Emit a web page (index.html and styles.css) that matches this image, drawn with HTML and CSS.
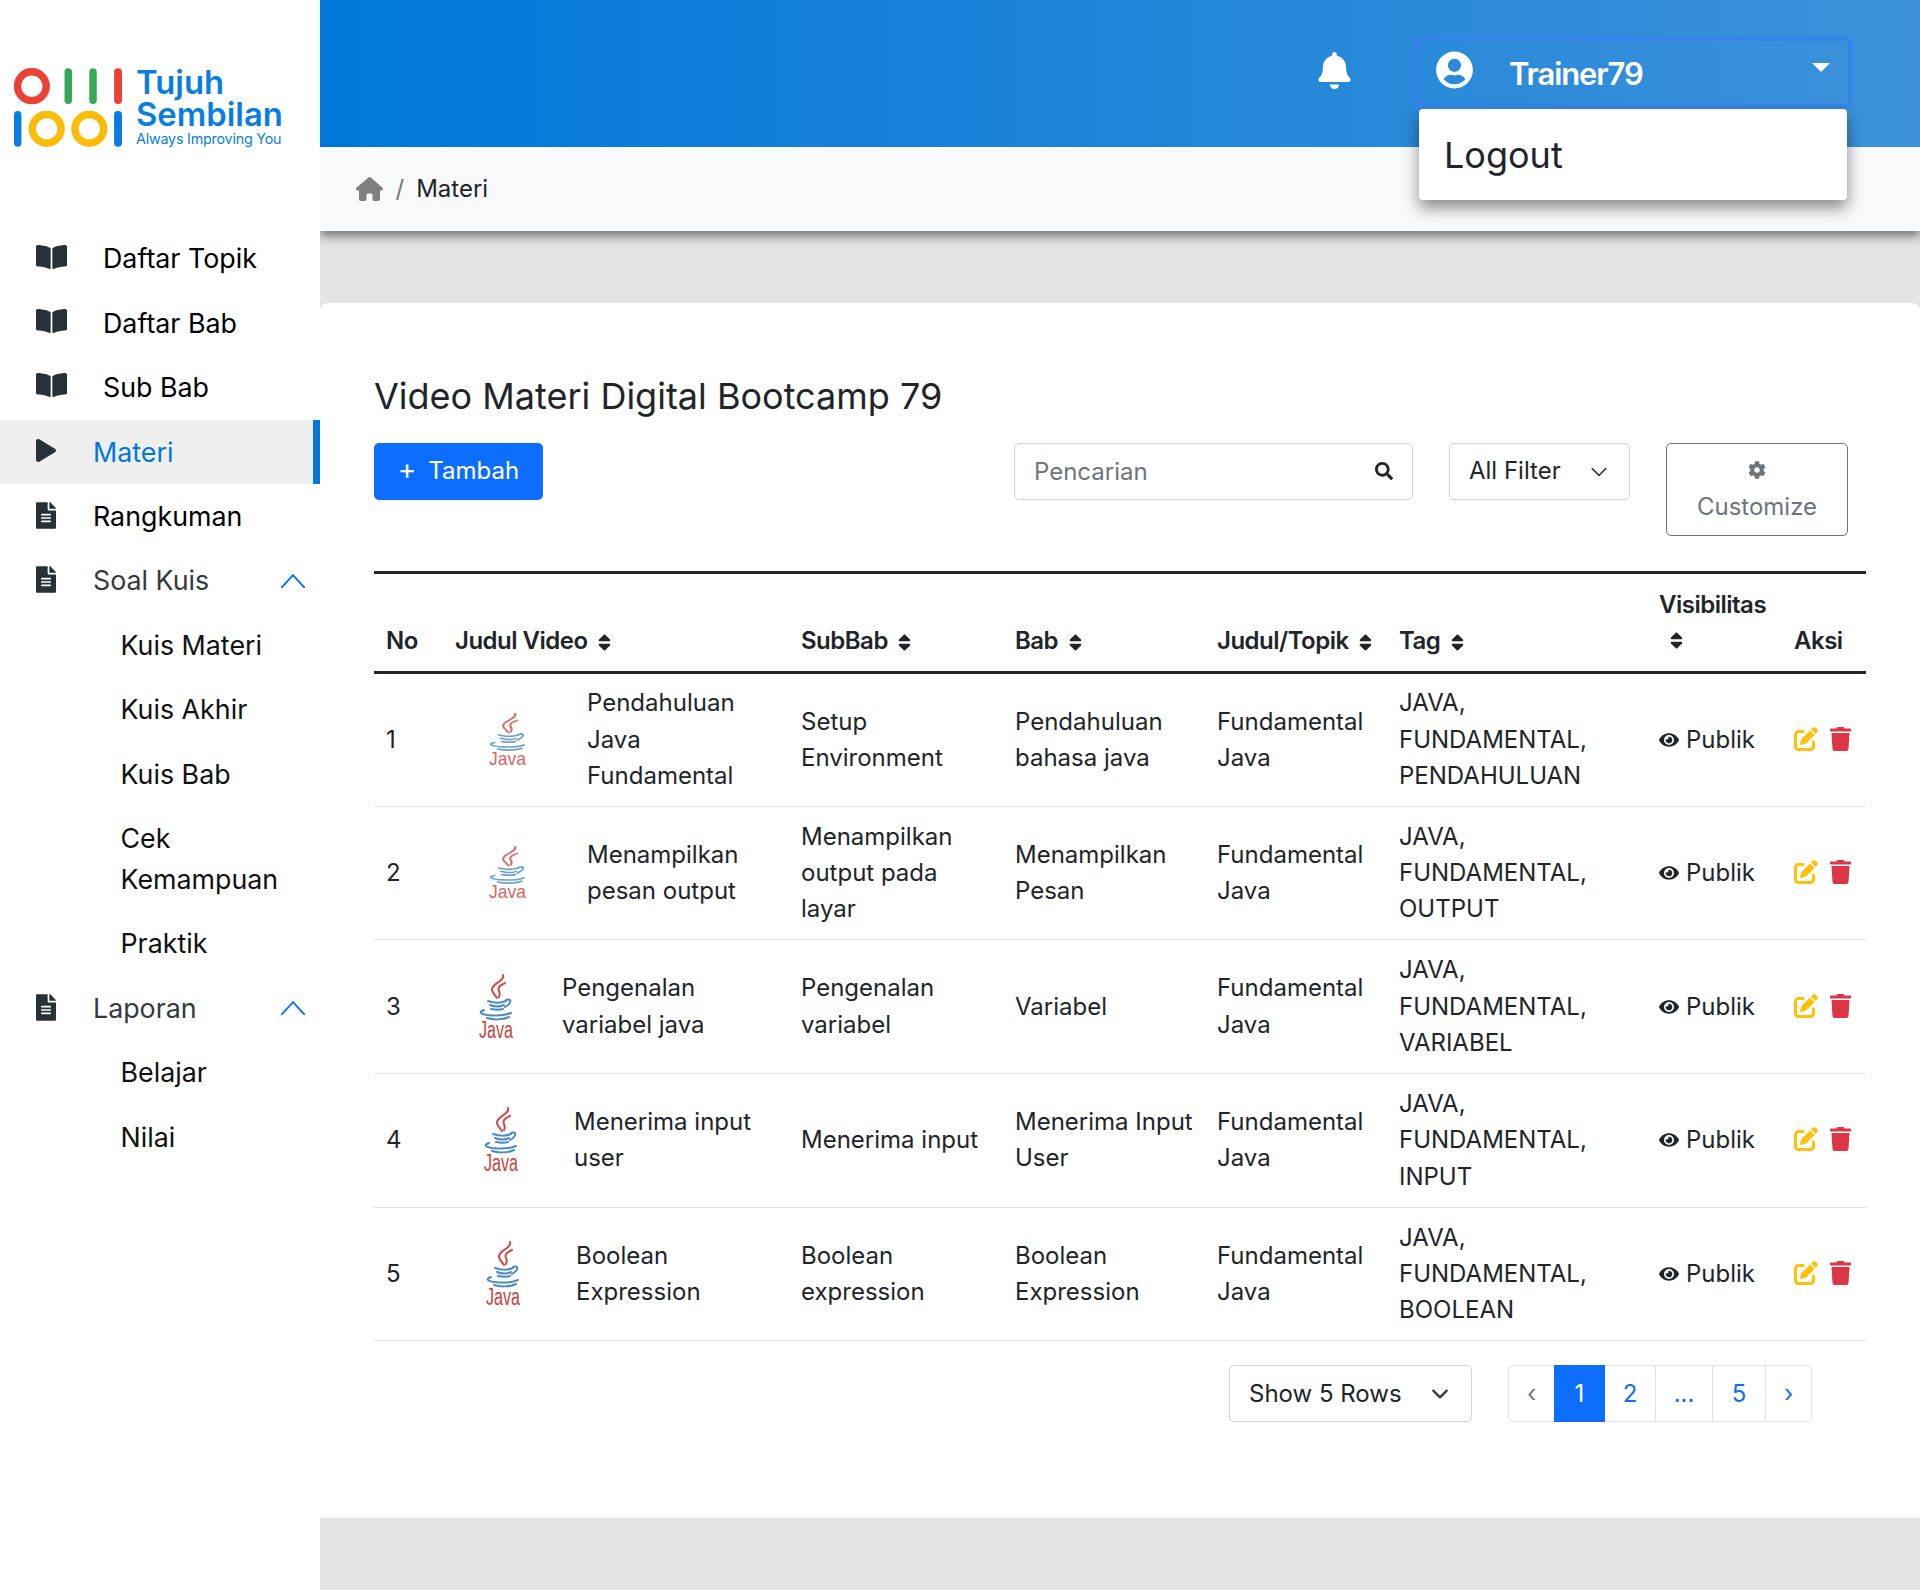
FILE: index.html
```html
<!DOCTYPE html>
<html lang="en">
<head>
    <meta charset="UTF-8">
    <meta name="viewport" content="width=device-width, initial-scale=1.0">
    <title>Video Materi</title>
    <link rel="stylesheet" href="styles.css">
</head>
<body>
    <svg class="sprites" xmlns="http://www.w3.org/2000/svg">
        <symbol id="i-book" viewBox="0 0 576 512"><path d="M542.22 32.05c-54.8 3.11-163.72 14.43-230.96 55.59-4.64 2.84-7.27 7.89-7.27 13.17v363.87c0 11.55 12.63 18.85 23.28 13.49 69.18-34.82 169.23-44.32 218.7-46.92 16.89-.89 30.02-14.43 30.02-30.66V62.75c.01-17.71-15.35-31.74-33.77-30.7zM264.73 87.64C197.5 46.48 88.58 35.17 33.78 32.05 15.36 31.01 0 45.04 0 62.75V400.6c0 16.24 13.13 29.78 30.02 30.66 49.49 2.6 149.59 12.11 218.77 46.95 10.62 5.35 23.21-1.94 23.21-13.46V100.63c0-5.29-2.62-10.14-7.27-12.99z"/></symbol>
        <symbol id="i-play" viewBox="0 0 448 512"><path d="M424.4 214.7L72.4 6.6C43.8-10.3 0 6.1 0 47.9V464c0 37.5 40.7 60.1 72.4 41.3l352-208c31.4-18.5 31.5-64.1 0-82.6z"/></symbol>
        <symbol id="i-file" viewBox="0 0 384 512"><path d="M224 136V0H24C10.7 0 0 10.7 0 24v464c0 13.3 10.7 24 24 24h336c13.3 0 24-10.7 24-24V160H248c-13.2 0-24-10.8-24-24zm64 236c0 6.6-5.4 12-12 12H108c-6.6 0-12-5.4-12-12v-8c0-6.6 5.4-12 12-12h168c6.6 0 12 5.4 12 12v8zm0-64c0 6.6-5.4 12-12 12H108c-6.6 0-12-5.4-12-12v-8c0-6.6 5.4-12 12-12h168c6.6 0 12 5.4 12 12v8zm0-72v8c0 6.6-5.4 12-12 12H108c-6.6 0-12-5.4-12-12v-8c0-6.6 5.4-12 12-12h168c6.6 0 12 5.4 12 12zm96-114.1v6.1H256V0h6.1c6.4 0 12.5 2.5 17 7l97.9 98c4.5 4.5 7 10.6 7 16.9z"/></symbol>
        <symbol id="i-up" viewBox="0 0 24 15"><path d="M1 14L12 2l11 12" fill="none" stroke="currentColor" stroke-width="1.8"/></symbol>
        <symbol id="i-sort" viewBox="0 0 320 512"><path d="M41 288h238c21.4 0 32.1 25.9 17 41L177 448c-9.4 9.4-24.6 9.4-33.9 0L24 329c-15.1-15.1-4.4-41 17-41zm255-105L177 64c-9.4-9.4-24.6-9.4-33.9 0L24 183c-15.1 15.1-4.4 41 17 41h238c21.4 0 32.1-25.9 17-41z"/></symbol>
        <symbol id="i-eye" viewBox="0 0 576 512"><path d="M572.52 241.4C518.29 135.59 410.93 64 288 64S57.68 135.64 3.48 241.41a32.35 32.35 0 0 0 0 29.19C57.71 376.41 165.07 448 288 448s230.32-71.64 284.52-177.41a32.35 32.35 0 0 0 0-29.19zM288 400a144 144 0 1 1 144-144 143.93 143.93 0 0 1-144 144zm0-240a95.31 95.31 0 0 0-25.31 3.79 47.85 47.85 0 0 1-66.9 66.9A95.78 95.78 0 1 0 288 160z"/></symbol>
        <symbol id="i-edit" viewBox="0 0 512 512"><path d="M471.6 21.7c-21.9-21.9-57.3-21.9-79.2 0L362.3 51.7l97.9 97.9 30.1-30.1c21.9-21.9 21.9-57.3 0-79.2L471.6 21.7zm-299.2 220c-6.1 6.1-10.8 13.6-13.5 21.9l-29.6 88.8c-2.9 8.6-.6 18.1 5.8 24.6s15.9 8.7 24.6 5.8l88.8-29.6c8.2-2.7 15.7-7.4 21.9-13.5L437.7 172.3 339.7 74.3 172.4 241.7zM96 64C43 64 0 107 0 160V416c0 53 43 96 96 96H352c53 0 96-43 96-96V320c0-17.7-14.3-32-32-32s-32 14.3-32 32v96c0 17.7-14.3 32-32 32H96c-17.7 0-32-14.3-32-32V160c0-17.7 14.3-32 32-32h96c17.7 0 32-14.3 32-32s-14.3-32-32-32H96z"/></symbol>
        <symbol id="i-trash" viewBox="0 0 448 512"><path d="M432 32H312l-9.4-18.7A24 24 0 0 0 281.1 0H166.8a23.72 23.72 0 0 0-21.4 13.3L136 32H16A16 16 0 0 0 0 48v32a16 16 0 0 0 16 16h416a16 16 0 0 0 16-16V48a16 16 0 0 0-16-16zM53.2 467a48 48 0 0 0 47.9 45h245.8a48 48 0 0 0 47.9-45L416 128H32z"/></symbol>
        <symbol id="i-chevron" viewBox="0 0 16 16"><path d="M2 5l6 6 6-6" fill="none" stroke="currentColor" stroke-linecap="round" stroke-linejoin="round"/></symbol>
        <symbol id="i-java" viewBox="0 0 34 66" preserveAspectRatio="none">
            <g class="java-steam">
                <path d="M24 1C26 7 12 10 13 16 13.500 19 16 21 18 24"/>
                <path d="M26 9C22 11 18 13 20 17 21 19 21 21 20 23"/>
            </g>
            <g class="java-cup">
                <path d="M9 27C15 29 22 29 27 27"/>
                <path d="M27 26C33 24 33 29 26 33"/>
                <path d="M11 31C16 33 21 33 25 31"/>
                <path d="M12 35C17 36 21 36 24 35"/>
                <path d="M5 36C-1 38 2 40 8 41 16 42 25 42 32 39"/>
                <path d="M8 44C14 46 24 46 30 43"/>
            </g>
            <text class="java-word" x="0" y="64" textLength="34" lengthAdjust="spacingAndGlyphs">Java</text>
        </symbol>
    </svg>

    <div class="app">
        <aside class="sidebar">
            <div class="logo">
                <svg class="logo-mark" viewBox="0 0 110 80" xmlns="http://www.w3.org/2000/svg">
                    <circle cx="18" cy="18" r="14.500" fill="none" stroke="#ea4335" stroke-width="7.500"/>
                    <rect x="51" y="0" width="7.500" height="36" rx="3.700" fill="#34a853"/>
                    <rect x="76" y="0" width="7.500" height="36" rx="3.700" fill="#34a853"/>
                    <rect x="101" y="0" width="8" height="36" rx="3.700" fill="#ea4335"/>
                    <rect x="0" y="43" width="7.500" height="36" rx="3.700" fill="#0a7ee0"/>
                    <circle cx="33" cy="61" r="14.500" fill="none" stroke="#fbbc05" stroke-width="7.500"/>
                    <circle cx="76" cy="61" r="14.500" fill="none" stroke="#fbbc05" stroke-width="7.500"/>
                    <rect x="101" y="43" width="8" height="36" rx="3.700" fill="#0a7ee0"/>
                </svg>
                <div class="logo-text">
                    <div class="logo-name">Tujuh</div>
                    <div class="logo-name">Sembilan</div>
                    <div class="logo-tag">Always Improving You</div>
                </div>
            </div>
            <nav class="menu">
                <a class="menu-item wide"><svg class="menu-icon book"><use href="#i-book"/></svg>Daftar Topik</a>
                <a class="menu-item wide"><svg class="menu-icon book"><use href="#i-book"/></svg>Daftar Bab</a>
                <a class="menu-item wide"><svg class="menu-icon book"><use href="#i-book"/></svg>Sub Bab</a>
                <a class="menu-item active"><svg class="menu-icon"><use href="#i-play"/></svg>Materi</a>
                <a class="menu-item"><svg class="menu-icon"><use href="#i-file"/></svg>Rangkuman</a>
                <a class="menu-item group"><svg class="menu-icon"><use href="#i-file"/></svg>Soal Kuis<svg class="menu-arrow"><use href="#i-up"/></svg></a>
                <a class="menu-sub">Kuis Materi</a>
                <a class="menu-sub">Kuis Akhir</a>
                <a class="menu-sub">Kuis Bab</a>
                <a class="menu-sub">Cek Kemampuan</a>
                <a class="menu-sub">Praktik</a>
                <a class="menu-item group"><svg class="menu-icon"><use href="#i-file"/></svg>Laporan<svg class="menu-arrow"><use href="#i-up"/></svg></a>
                <a class="menu-sub">Belajar</a>
                <a class="menu-sub">Nilai</a>
            </nav>
        </aside>

        <main class="main">
            <header class="topbar">
                <svg class="bell" viewBox="0 0 448 512"><path d="M224 512c35.32 0 63.97-28.65 63.97-64H160.03c0 35.35 28.65 64 63.97 64zm215.39-149.71c-19.32-20.76-55.47-51.99-55.47-154.29 0-77.7-54.48-139.9-127.94-155.16V32c0-17.67-14.32-32-31.98-32s-31.98 14.33-31.98 32v20.84C118.56 68.1 64.08 130.3 64.08 208c0 102.3-36.15 133.53-55.47 154.29-6 6.45-8.66 14.16-8.61 21.71.11 16.4 12.98 32 32.1 32h383.8c19.12 0 32-15.6 32.1-32 .05-7.55-2.61-15.27-8.61-21.71z"/></svg>
                <div class="user-box">
                    <button class="user-btn">
                        <svg class="avatar" viewBox="0 0 496 512"><path d="M248 8C111 8 0 119 0 256s111 248 248 248 248-111 248-248S385 8 248 8zm0 96c48.6 0 88 39.4 88 88s-39.4 88-88 88-88-39.4-88-88 39.4-88 88-88zm0 344c-58.7 0-111.3-26.6-146.5-68.2 18.8-35.4 55.6-59.8 98.5-59.8 2.4 0 4.8.4 7.1 1.1 13 4.2 26.6 6.9 40.9 6.9 14.3 0 28-2.7 40.9-6.9 2.3-.7 4.7-1.1 7.1-1.1 42.9 0 79.7 24.4 98.5 59.8C359.3 421.4 306.7 448 248 448z"/></svg>
                        <span class="user-name">Trainer79</span>
                        <span class="caret"></span>
                    </button>
                    <div class="dropdown">Logout</div>
                </div>
            </header>
            <div class="breadcrumb">
                <svg class="home" viewBox="0 0 576 512"><path d="M575.8 255.5c0 18-15 32.1-32 32.1h-32l.7 160.2c0 2.7-.2 5.4-.5 8.1V472c0 22.1-17.9 40-40 40H456c-1.100 0-2.200 0-3.300-.1c-1.400 .1-2.800 .1-4.200 .1H416 392c-22.100 0-40-17.900-40-40V448 384c0-17.700-14.300-32-32-32H256c-17.700 0-32 14.300-32 32v64 24c0 22.100-17.900 40-40 40H160 128.100c-1.500 0-3-.1-4.500-.2c-1.200 .1-2.400 .2-3.600 .2H104c-22.100 0-40-17.900-40-40V360c0-.9 0-1.900 .1-2.800V287.600H32c-18 0-32-14-32-32.100c0-9 3-17 10-24L266.400 8c7-7 15-8 22-8s15 2 21 7L564.800 231.500c8 7 12 15 11 24z"/></svg>
                <span class="crumb-sep">/</span>
                <span>Materi</span>
            </div>

            <section class="card">
                <h1 class="card-title">Video Materi Digital Bootcamp 79</h1>
                <div class="toolbar">
                    <button class="btn-add"><span class="plus">+</span>Tambah</button>
                    <div class="search">
                        <input type="text" placeholder="Pencarian">
                        <svg class="search-icon" viewBox="0 0 512 512"><path d="M505 442.7L405.3 343c-4.500-4.500-10.600-7-17-7H372c27.600-35.300 44-79.700 44-128C416 93.100 322.900 0 208 0S0 93.100 0 208s93.100 208 208 208c48.300 0 92.700-16.400 128-44v16.300c0 6.400 2.500 12.500 7 17l99.700 99.700c9.400 9.400 24.600 9.400 33.900 0l28.300-28.300c9.400-9.400 9.400-24.600.1-34zM208 336c-70.700 0-128-57.200-128-128 0-70.700 57.200-128 128-128 70.700 0 128 57.200 128 128 0 70.700-57.200 128-128 128z"/></svg>
                    </div>
                    <div class="select filter">All Filter<svg class="select-arrow"><use href="#i-chevron"/></svg></div>
                    <button class="btn-custom">
                        <svg class="gear" viewBox="0 0 512 512"><path d="M487.4 315.7l-42.600-24.600c4.300-23.200 4.300-47 0-70.200l42.600-24.600c4.900-2.800 7.100-8.600 5.500-14-11.100-35.600-30-67.800-54.700-94.600-3.800-4.100-10-5.100-14.800-2.300L380.800 110c-17.900-15.400-38.500-27.300-60.800-35.100V25.800c0-5.600-3.900-10.500-9.400-11.700-36.700-8.200-74.300-7.800-109.200 0-5.500 1.200-9.400 6.100-9.400 11.700V75c-22.200 7.900-42.800 19.800-60.800 35.100L88.700 85.500c-4.900-2.800-11-1.900-14.800 2.300-24.700 26.700-43.600 58.900-54.700 94.600-1.700 5.400.6 11.200 5.500 14L67.300 221c-4.300 23.200-4.300 47 0 70.200l-42.600 24.600c-4.900 2.800-7.100 8.600-5.500 14 11.100 35.600 30 67.800 54.700 94.600 3.800 4.100 10 5.100 14.800 2.300l42.600-24.600c17.900 15.400 38.500 27.300 60.800 35.100v49.200c0 5.600 3.900 10.500 9.400 11.700 36.700 8.200 74.300 7.800 109.200 0 5.500-1.200 9.400-6.100 9.400-11.700v-49.200c22.200-7.900 42.800-19.800 60.800-35.100l42.600 24.600c4.900 2.800 11 1.900 14.800-2.300 24.700-26.700 43.600-58.900 54.700-94.600 1.500-5.500-.7-11.300-5.600-14.100zM256 336c-44.100 0-80-35.900-80-80s35.900-80 80-80 80 35.900 80 80-35.900 80-80 80z"/></svg>
                        <span>Customize</span>
                    </button>
                </div>

                <table class="data-table">
                    <colgroup>
                        <col class="c-no"><col class="c-title"><col class="c-sub"><col class="c-bab"><col class="c-topic"><col class="c-tag"><col class="c-vis"><col class="c-act">
                    </colgroup>
                    <thead>
                        <tr>
                            <th>No</th>
                            <th>Judul Video <svg class="sort"><use href="#i-sort"/></svg></th>
                            <th>SubBab <svg class="sort"><use href="#i-sort"/></svg></th>
                            <th>Bab <svg class="sort"><use href="#i-sort"/></svg></th>
                            <th>Judul/Topik <svg class="sort"><use href="#i-sort"/></svg></th>
                            <th>Tag <svg class="sort"><use href="#i-sort"/></svg></th>
                            <th>Visibilitas <svg class="sort sort-wrap"><use href="#i-sort"/></svg></th>
                            <th>Aksi</th>
                        </tr>
                    </thead>
                    <tbody>
                        <tr>
                            <td>1</td>
                            <td><div class="video v-a"><svg class="java java-faded"><use href="#i-java"/></svg><span>Pendahuluan Java Fundamental</span></div></td>
                            <td>Setup Environment</td>
                            <td>Pendahuluan bahasa java</td>
                            <td>Fundamental Java</td>
                            <td>JAVA, FUNDAMENTAL, PENDAHULUAN</td>
                            <td><div class="visible"><svg class="eye"><use href="#i-eye"/></svg>Publik</div></td>
                            <td><div class="actions"><svg class="edit"><use href="#i-edit"/></svg><svg class="trash"><use href="#i-trash"/></svg></div></td>
                        </tr>
                        <tr>
                            <td>2</td>
                            <td><div class="video v-a"><svg class="java java-faded"><use href="#i-java"/></svg><span>Menampilkan pesan output</span></div></td>
                            <td>Menampilkan output pada layar</td>
                            <td>Menampilkan Pesan</td>
                            <td>Fundamental Java</td>
                            <td>JAVA, FUNDAMENTAL, OUTPUT</td>
                            <td><div class="visible"><svg class="eye"><use href="#i-eye"/></svg>Publik</div></td>
                            <td><div class="actions"><svg class="edit"><use href="#i-edit"/></svg><svg class="trash"><use href="#i-trash"/></svg></div></td>
                        </tr>
                        <tr>
                            <td>3</td>
                            <td><div class="video v-b"><svg class="java"><use href="#i-java"/></svg><span>Pengenalan variabel java</span></div></td>
                            <td>Pengenalan variabel</td>
                            <td>Variabel</td>
                            <td>Fundamental Java</td>
                            <td>JAVA, FUNDAMENTAL, VARIABEL</td>
                            <td><div class="visible"><svg class="eye"><use href="#i-eye"/></svg>Publik</div></td>
                            <td><div class="actions"><svg class="edit"><use href="#i-edit"/></svg><svg class="trash"><use href="#i-trash"/></svg></div></td>
                        </tr>
                        <tr>
                            <td>4</td>
                            <td><div class="video v-c"><svg class="java"><use href="#i-java"/></svg><span>Menerima input user</span></div></td>
                            <td>Menerima input</td>
                            <td>Menerima Input User</td>
                            <td>Fundamental Java</td>
                            <td>JAVA, FUNDAMENTAL, INPUT</td>
                            <td><div class="visible"><svg class="eye"><use href="#i-eye"/></svg>Publik</div></td>
                            <td><div class="actions"><svg class="edit"><use href="#i-edit"/></svg><svg class="trash"><use href="#i-trash"/></svg></div></td>
                        </tr>
                        <tr>
                            <td>5</td>
                            <td><div class="video v-d"><svg class="java"><use href="#i-java"/></svg><span>Boolean Expression</span></div></td>
                            <td>Boolean expression</td>
                            <td>Boolean Expression</td>
                            <td>Fundamental Java</td>
                            <td>JAVA, FUNDAMENTAL, BOOLEAN</td>
                            <td><div class="visible"><svg class="eye"><use href="#i-eye"/></svg>Publik</div></td>
                            <td><div class="actions"><svg class="edit"><use href="#i-edit"/></svg><svg class="trash"><use href="#i-trash"/></svg></div></td>
                        </tr>
                    </tbody>
                </table>

                <div class="table-footer">
                    <div class="select rows">Show 5 Rows<svg class="select-arrow"><use href="#i-chevron"/></svg></div>
                    <ul class="pager">
                        <li class="pg-prev">‹</li>
                        <li class="pg-one current">1</li>
                        <li class="pg-two">2</li>
                        <li class="pg-gap">...</li>
                        <li class="pg-five">5</li>
                        <li class="pg-next">›</li>
                    </ul>
                </div>
            </section>
        </main>
    </div>
</body>
</html>
```

FILE: styles.css
```css
* {
    box-sizing: border-box;
}
body {
    margin: 0;
    background-color: #e4e4e4;
    font-family: Inter, "Liberation Sans", sans-serif;
    font-size: 24px;
    line-height: 36.3px;
    color: #212529;
}
.sprites {
    display: none;
}
.app {
    display: flex;
    min-height: 1590px;
}

/* sidebar */
.sidebar {
    width: 320px;
    flex: none;
    background-color: #fff;
    position: relative;
    z-index: 1;
}
.logo {
    height: 226.5px;
    padding: 68px 0 0 14px;
    display: flex;
    gap: 13px;
}
.logo-mark {
    width: 109px;
    height: 80px;
}
.logo-text {
    margin-top: -2px;
    color: #0a7ee0;
}
.logo-name {
    font-size: 32.8px;
    font-weight: 600;
    line-height: 32px;
}
.logo-tag {
    font-size: 14.3px;
    line-height: 18px;
    letter-spacing: -0.2px;
}
.menu-item, .menu-sub {
    display: flex;
    align-items: center;
    min-height: 64.4px;
    color: #000;
    font-size: 26.8px;
    line-height: 40.5px;
}
.menu-item {
    padding-left: 36px;
}
.menu-sub {
    padding: 12px 40px 12px 120.5px;
    color: #111;
}
.menu-icon {
    width: 20px;
    height: 27px;
    margin: -2px 37px 0 0;
    fill: #263238;
    flex: none;
}
.menu-icon.book {
    width: 31px;
    height: 28px;
    margin: -4px 36px 0 0;
}
.menu-item.active {
    background-color: #efefef;
    border-right: 7px solid #0077d9;
    color: #0077d9;
}
.menu-item.group {
    color: #343a40;
}
.menu-arrow {
    width: 26px;
    height: 16px;
    margin-left: auto;
    margin-right: 14px;
    color: #0d6efd;
}

/* top */
.main {
    flex: 1;
    min-width: 0;
}
.topbar {
    height: 147px;
    background: linear-gradient(to right, #0077d9, #3d92da);
    display: flex;
    justify-content: flex-end;
    padding: 36px 67px 0 0;
    position: relative;
    z-index: 2;
}
.bell {
    width: 33px;
    height: 37px;
    margin: 16px 62px 0 0;
    fill: #fff;
}
.user-box {
    position: relative;
    width: 440px;
    height: 73px;
}
.user-btn {
    width: 100%;
    height: 100%;
    display: flex;
    align-items: flex-start;
    padding: 10px 18px 0 18px;
    border: 5px solid #3485e8;
    border-radius: 8px;
    background: transparent;
    color: #fff;
    font: inherit;
}
.avatar {
    width: 37px;
    height: 38px;
    fill: #fff;
    flex: none;
}
.user-name {
    margin: 2.5px 0 0 36px;
    font-size: 31px;
    font-weight: 600;
    line-height: 40px;
    letter-spacing: -1.1px;
}
.caret {
    margin: 12px 0 0 auto;
    border-top: 9px solid #fff;
    border-left: 9px solid transparent;
    border-right: 9px solid transparent;
}
.dropdown {
    position: absolute;
    top: 73px;
    left: 6px;
    width: 428px;
    height: 91px;
    padding: 0 25px;
    background-color: #fff;
    border-radius: 4px;
    box-shadow: 0 8px 16px rgba(0, 0, 0, .45);
    font-size: 36px;
    line-height: 93px;
}
.breadcrumb {
    height: 84px;
    padding-left: 36px;
    display: flex;
    align-items: center;
    background-color: #f8f9fa;
    box-shadow: 0 5px 10px rgba(0, 0, 0, .5);
    position: relative;
}
.home {
    width: 27px;
    height: 24px;
    fill: #808080;
}
.crumb-sep {
    margin: 0 12px 0 12.5px;
    color: #6c757d;
}

/* card */
.card {
    margin-top: 72px;
    height: 1215px;
    padding: 66px 54px 0;
    background-color: #fff;
    border-radius: 8px 8px 0 0;
}
.card-title {
    margin: 0 0 20px;
    font-size: 36px;
    font-weight: 400;
    line-height: 54px;
}
.toolbar {
    display: flex;
    align-items: flex-start;
    height: 93px;
    padding-right: 18px;
}
.btn-add {
    width: 169px;
    height: 57px;
    border: none;
    border-radius: 5px;
    background-color: #0d6efd;
    color: #fff;
    font: inherit;
}
.plus {
    margin-right: 12px;
    font-size: 28px;
    line-height: 24px;
}
.search {
    position: relative;
    width: 399px;
    height: 57px;
    margin: 0 36px 0 auto;
}
.search input {
    width: 100%;
    height: 100%;
    padding: 0 60px 0 19px;
    border: 1px solid #ced4da;
    border-radius: 5px;
    font: inherit;
    color: #212529;
}
.search input::placeholder {
    color: #6c757d;
}
.search-icon {
    position: absolute;
    right: 20px;
    top: 19px;
    width: 18px;
    height: 18px;
    fill: #212529;
}
.select {
    display: flex;
    align-items: center;
    height: 57px;
    padding-left: 19px;
    border: 1px solid #ced4da;
    border-radius: 5px;
    background-color: #fff;
}
.select-arrow {
    width: 18px;
    height: 18px;
    margin-left: auto;
    color: #343a40;
    stroke-width: 2px;
}
.filter {
    width: 181px;
    margin-right: 36px;
    padding-right: 21px;
}
.filter .select-arrow {
    stroke-width: 1.4px;
}
.btn-custom {
    width: 182px;
    height: 93px;
    padding: 0;
    border: 1px solid #6c757d;
    border-radius: 5px;
    background: transparent;
    color: #6c757d;
    font: inherit;
    display: flex;
    flex-direction: column;
    align-items: center;
}
.gear {
    width: 18px;
    height: 18px;
    margin: 17px 0 10px;
    fill: #6c757d;
}

/* table */
.data-table {
    width: 1492px;
    margin-top: 35px;
    table-layout: fixed;
    border-collapse: collapse;
}
.c-no { width: 69px; }
.c-title { width: 346px; }
.c-sub { width: 214px; }
.c-bab { width: 202px; }
.c-topic { width: 182px; }
.c-tag { width: 260px; }
.c-vis { width: 135px; }
.c-act { width: 84px; }
.data-table thead tr {
    border-top: 3px solid #212529;
    border-bottom: 3px solid #212529;
}
.data-table th {
    height: 100px;
    padding: 12px;
    text-align: left;
    vertical-align: bottom;
    font-weight: 600;
    letter-spacing: -0.5px;
}
.data-table td {
    height: 133.7px;
    padding: 0 12px;
    vertical-align: middle;
    border-bottom: 1px solid #dee2e6;
}
.sort {
    width: 13px;
    height: 21px;
    margin-left: 5px;
    fill: #212529;
    vertical-align: -4px;
}
.sort-wrap {
    display: block;
    margin: 7px 0 8px 11px;
}
.video {
    display: flex;
    align-items: center;
}
.java {
    width: 37px;
    height: 54px;
    flex: none;
}
.java-steam, .java-cup {
    fill: none;
    stroke-width: 2;
    stroke-linecap: round;
}
.java-steam {
    stroke: #cf4b45;
}
.java-cup {
    stroke: #4a8ac4;
}
.java-word {
    font-family: "Liberation Sans", sans-serif;
    font-size: 23px;
    fill: #c9423c;
}
.java-faded {
    opacity: .8;
}
.v-a .java { margin: 0 61px 0 34px; }
.v-b .java { margin: 0 49px 0 24px; width: 34px; height: 66px; }
.v-c .java { margin: 0 56px 0 29px; width: 34px; height: 66px; }
.v-d .java { margin: 0 56px 0 31px; width: 34px; height: 66px; }
.visible {
    display: flex;
    align-items: center;
    white-space: nowrap;
}
.eye {
    width: 20px;
    height: 18px;
    margin-right: 7px;
    fill: #212529;
    flex: none;
}
.actions {
    display: flex;
    align-items: center;
    gap: 12px;
    padding-bottom: 2px;
}
.edit {
    width: 24px;
    height: 24px;
    fill: #ffc107;
}
.trash {
    width: 21px;
    height: 24px;
    fill: #dc3545;
}

/* footer of table */
.table-footer {
    display: flex;
    margin-top: 24px;
    width: 1438px;
}
.rows {
    width: 243px;
    margin-left: auto;
    margin-right: 36px;
    padding-right: 22px;
}
.pager {
    display: flex;
    margin: 0;
    padding: 0;
    list-style: none;
    height: 57px;
    color: #0d6efd;
    border: 1px solid #dee2e6;
    border-radius: 5px;
    line-height: 55px;
    text-align: center;
}
.pager li {
    border-left: 1px solid #dee2e6;
}
.pager .pg-prev {
    width: 45px;
    border-left: none;
    color: #6c757d;
}
.pager .current {
    width: 51px;
    margin: -1px 0;
    border: none;
    line-height: 57px;
    background-color: #0d6efd;
    color: #fff;
}
.pager .pg-two {
    width: 50px;
    border-left: none;
}
.pg-gap { width: 57px; }
.pg-five { width: 53px; }
.pg-next { width: 46px; }
```
